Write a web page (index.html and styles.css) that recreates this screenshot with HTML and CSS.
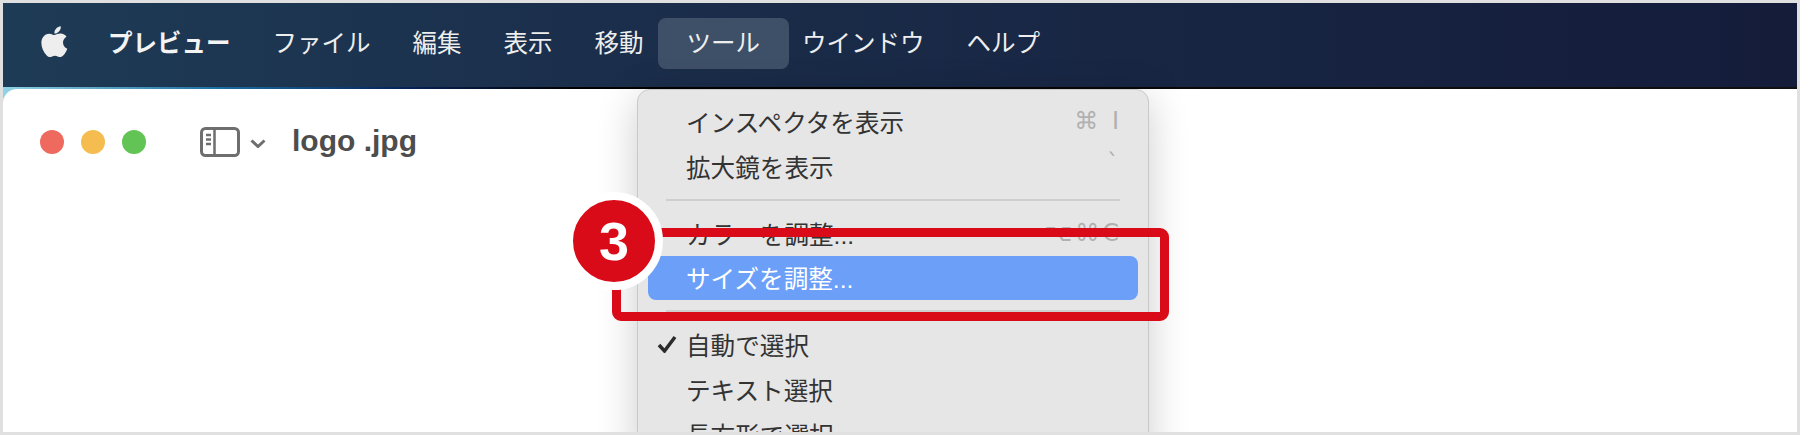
FILE: index.html
```html
<!DOCTYPE html>
<html lang="ja">
<head>
    <meta charset="UTF-8">
    <meta name="viewport" content="width=device-width, initial-scale=1.0">
    <title>ツール メニュー</title>
    <link rel="stylesheet" href="styles.css">
</head>
<body>
    <div class="frame">
        <div class="screen">
            <div class="menubar">
                <svg class="apple" viewBox="3.6 3 16.4 18.4"><path d="M17.05 20.28c-.98.95-2.05.8-3.08.35-1.09-.46-2.09-.48-3.24 0-1.44.62-2.2.44-3.06-.35C2.79 15.25 3.51 7.59 9.05 7.31c1.35.07 2.29.74 3.08.8 1.18-.24 2.31-.93 3.57-.84 1.51.12 2.65.72 3.4 1.8-3.12 1.87-2.38 5.98.48 7.13-.57 1.5-1.31 2.99-2.54 4.09zM12.03 7.25c-.15-2.23 1.66-4.07 3.74-4.25.29 2.58-2.34 4.5-3.74 4.25z"/></svg>
                <span class="bar-item app-name">プレビュー</span>
                <span class="bar-item">ファイル</span>
                <span class="bar-item">編集</span>
                <span class="bar-item">表示</span>
                <span class="bar-item">移動</span>
                <span class="bar-item active">ツール</span>
                <span class="bar-item">ウインドウ</span>
                <span class="bar-item">ヘルプ</span>
            </div>
            <div class="desktop">
                <div class="window">
                    <div class="titlebar">
                        <div class="lights">
                            <span class="light red"></span>
                            <span class="light yellow"></span>
                            <span class="light green"></span>
                        </div>
                        <svg class="sidebar-icon" viewBox="0 0 40 30">
                            <rect x="1.5" y="1.5" width="37" height="27" rx="4"/>
                            <path d="M14.5 1.5v27M6 8h5M6 12.5h5M6 17h5"/>
                        </svg>
                        <svg class="chevron" viewBox="0 0 16 9"><path d="M1.5 1.5 8 7.5l6.500-6"/></svg>
                        <span class="doc-title">logo .jpg</span>
                    </div>
                </div>
            </div>
            <div class="dropdown">
                <div class="row"><span>インスペクタを表示</span><span class="keys">⌘ I</span></div>
                <div class="row"><span>拡大鏡を表示</span><span class="keys tick">`</span></div>
                <div class="sep"></div>
                <div class="row"><span>カラーを調整...</span><span class="keys">⌥⌘C</span></div>
                <div class="row selected"><span>サイズを調整...</span></div>
                <div class="sep"></div>
                <div class="row">
                    <svg class="check" viewBox="0 0 20 18"><path d="M2 10l5.500 6L18 2"/></svg>
                    <span>自動で選択</span>
                </div>
                <div class="row"><span>テキスト選択</span></div>
                <div class="row"><span>長方形で選択</span></div>
            </div>
        </div>
        <div class="callout-box"></div>
        <div class="callout-badge">3</div>
    </div>
</body>
</html>
```

FILE: styles.css
```css
:root {
    --frame-color: #e0e0e0;
    --menu-color: #e6e6e6;
    --text-color: #333;
    --callout-color: #d90b18;
}

* {
    box-sizing: border-box;
}

body {
    margin: 0;
    font-family: 'Liberation Sans', 'Noto Sans CJK JP', sans-serif;
}

.frame {
    position: relative;
    width: 1800px;
    height: 435px;
    padding: 3px;
    background-color: var(--frame-color);
    overflow: hidden;
}

.screen {
    position: relative;
    display: flex;
    flex-direction: column;
    height: 100%;
    overflow: hidden;
    background-color: #fff;
}

/* menu bar */
.menubar {
    display: flex;
    align-items: center;
    gap: 42px;
    flex: none;
    height: 84px;
    padding: 0 0 3px 37px;
    background: linear-gradient(to right, #1e3b56, #1a2c49 40%, #141c3a);
    color: #eee;
    font-size: 24.5px;
}

.apple {
    width: 28px;
    height: 32px;
    margin: -3px -2px 0 0;
    fill: #eee;
}

.bar-item {
    line-height: 51px;
    white-space: nowrap;
}

.app-name {
    font-weight: 700;
    color: #f4f4f4;
}

.bar-item.active {
    margin: 0 -29px 0 -28px;
    padding: 0 29px;
    border-radius: 8px;
    background-color: #3e4f68;
}

.desktop {
    flex: 1;
    padding-top: 2px;
    background: linear-gradient(to right, #8fd3e4, #1a6ea0 12%, #07245c 22%, #000 32%, #111 100%);
}

.window {
    height: 100%;
    border-top-left-radius: 14px;
    background-color: #fff;
}

.titlebar {
    display: flex;
    align-items: center;
    padding: 37px 0 0 37px;
}

.lights {
    display: flex;
    gap: 17px;
}

.light {
    width: 24px;
    height: 24px;
    border-radius: 50%;
}

.red {
    background-color: #ee6a5f;
}

.yellow {
    background-color: #f5bd4f;
}

.green {
    background-color: #61c454;
}

.sidebar-icon {
    width: 40px;
    height: 30px;
    margin-left: 54px;
    fill: none;
    stroke: #6e6e6e;
    stroke-width: 3;
}

.sidebar-icon path {
    stroke-width: 2.500;
}

.chevron {
    width: 16px;
    height: 9px;
    margin: 3px 0 0 10px;
    fill: none;
    stroke: #6e6e6e;
    stroke-width: 3;
}

.doc-title {
    margin: -2px 0 0 26px;
    font-size: 30px;
    font-weight: 700;
    color: #4d4d4d;
}

/* dropdown */
.dropdown {
    position: absolute;
    left: 634px;
    top: 86px;
    width: 512px;
    height: 380px;
    padding-top: 9px;
    border: 1px solid #c9c9c9;
    border-radius: 13px;
    background-color: var(--menu-color);
    box-shadow: 0 8px 40px rgba(0, 0, 0, 0.2);
    color: var(--text-color);
    font-size: 24.6px;
}

.row {
    position: relative;
    display: flex;
    align-items: center;
    justify-content: space-between;
    height: 45px;
    margin: 0 10px;
    padding: 0 16px 2px 38px;
    border-radius: 8px;
    white-space: nowrap;
}

.row.selected {
    height: 44px;
    margin-bottom: 1px;
    background-color: #6b9ff8;
    color: #fff;
}

.keys {
    font-family: 'DejaVu Sans', sans-serif;
    font-size: 24px;
    letter-spacing: 3px;
    color: #b1b1b1;
}

.tick {
    align-self: flex-start;
    margin-top: 5px;
}

.sep {
    height: 2px;
    margin: 10px 28px;
    background-color: #cfcfcf;
}

.check {
    position: absolute;
    left: 9px;
    top: 13px;
    width: 20px;
    height: 18px;
    fill: none;
    stroke: #2b2b2b;
    stroke-width: 3.500;
}

/* red callout */
.callout-box {
    position: absolute;
    left: 612px;
    top: 228px;
    width: 557px;
    height: 93px;
    border: 9px solid var(--callout-color);
    border-radius: 9px;
}

.callout-badge {
    position: absolute;
    left: 565px;
    top: 192px;
    display: flex;
    align-items: center;
    justify-content: center;
    width: 98px;
    height: 98px;
    border: 8px solid #fff;
    border-radius: 50%;
    background-color: var(--callout-color);
    color: #fff;
    font-size: 54px;
    font-weight: 700;
}
```
